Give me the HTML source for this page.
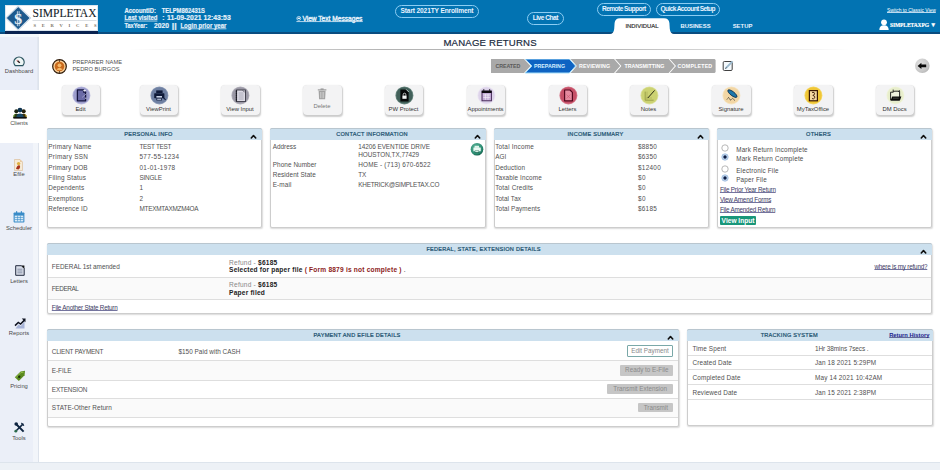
<!DOCTYPE html>
<html><head><meta charset="utf-8">
<style>
*{box-sizing:border-box;margin:0;padding:0}
html,body{width:940px;height:470px;overflow:hidden;background:#fff;font-family:"Liberation Sans",sans-serif;color:#333}
.a{position:absolute}
.t{position:absolute;white-space:nowrap;line-height:10px;height:10px;text-decoration-thickness:0.6px;text-underline-offset:0.7px}
u{text-decoration:underline;text-decoration-skip-ink:none;text-underline-offset:0px;text-decoration-color:rgba(234,244,255,.8)}
.ul{text-decoration:underline;text-decoration-skip-ink:none;text-underline-offset:0px;text-decoration-color:rgba(42,42,106,.65)}
#hdr{left:0;top:0;width:940px;height:34px;background:#0273b2;border-bottom:2px solid #0a4d80}
.hw{color:#fff;font-weight:700}
.pill{position:absolute;border:1.5px solid #8ccdf3;border-radius:8px;color:#eaf4ff;font-weight:700;text-align:center;white-space:nowrap}
#side{left:0;top:36px;width:38.5px;height:426px;background:linear-gradient(to right,#ebeff8 33.5px,#f2f5fa 33.5px);border-right:1px solid #dde3ec}
.si{position:absolute;left:0;width:38px;text-align:center;font-size:5.8px;color:#4a4a4a;line-height:8px}
.btn{position:absolute;top:84.6px;width:38.5px;height:30.4px;background:#f3f3f4;border-radius:4px;box-shadow:0.5px 1.5px 1.5px rgba(0,0,0,.2),0 0 1px rgba(0,0,0,.1)}
.btn .c{position:absolute;left:10px;top:1.5px;width:18px;height:18px;border-radius:50%;box-shadow:0 0 0 0.8px rgba(255,255,255,.6)}
.btn .l{position:absolute;left:-10px;width:58px;top:20.5px;text-align:center;font-size:5.9px;color:#333;line-height:8px;white-space:nowrap}
.pn{position:absolute;background:#fff;border:1px solid #cdcdcd;border-radius:2px;box-shadow:0.5px 1px 1.5px rgba(0,0,0,.15)}
.ph{position:absolute;left:-1px;top:-1px;right:-1px;height:12.1px;border-radius:2px 2px 0 0;background:#cce0ee;color:#184e6c;font-weight:400;font-size:5.6px;letter-spacing:0.25px;-webkit-text-stroke:0.2px #184e6c;line-height:11.8px;border-top:0.6px solid #b9c6cf;text-align:center;padding-right:12px}
.chev{position:absolute;width:4px;height:4px;border-left:1.6px solid #111;border-top:1.6px solid #111;transform:rotate(45deg)}
.b{font-size:6.4px;color:#3a3a3a}
.lk{color:#2a2a6a;text-decoration:underline}
.row{position:absolute;left:0;right:0;border-top:1px solid #e2e2e2}
</style></head><body>

<!-- HEADER -->
<div id="hdr" class="a"></div>
<div class="a" style="left:5px;top:4.5px;width:93px;height:26.8px;background:#fff;border:0.5px solid #dbe6ef"></div>
<svg class="a" style="left:5px;top:4.5px" width="93" height="27" viewBox="0 0 93 27">
  <polygon points="13.2,0.4 26.2,13.1 13.2,25.8 0.2,13.1" fill="#b8cde0"/><polygon points="13.2,1.2 25.4,13.1 13.2,25 1,13.1" fill="#f0f5fa"/>
  <polygon points="13.2,2 24.6,13.1 13.2,24.2 1.8,13.1" fill="#1d5a8e"/>
  <text x="13.2" y="19.4" text-anchor="middle" font-family="Liberation Serif" font-weight="700" font-size="15" fill="#e6eef6">S</text>
  <rect x="11.9" y="6.2" width="0.8" height="15" fill="#e6eef6"/><rect x="13.7" y="6.2" width="0.8" height="15" fill="#e6eef6"/>
  <text x="27.5" y="12.4" font-family="Liberation Serif" font-size="12.2" fill="#141e2a" stroke="#141e2a" stroke-width="0.1" textLength="64" lengthAdjust="spacingAndGlyphs">SIMPLETAX</text>
  <rect x="27.5" y="15.1" width="64" height="0.5" fill="#b7bec6"/>
  <text x="28.5" y="22.4" font-family="Liberation Serif" font-weight="700" font-size="4.6" fill="#7a7264" textLength="63">SERVICES</text>
</svg>

<svg class="a" style="left:0;top:0" width="380" height="34" viewBox="0 0 380 34" font-family="Liberation Sans" font-weight="700" font-size="6.9" fill="#e6f1fa" stroke="#e6f1fa" stroke-width="0.18">
  <text x="124.4" y="12.8" textLength="31.6" lengthAdjust="spacingAndGlyphs">AccountID:</text>
  <text x="161.7" y="12.8" textLength="43.1" lengthAdjust="spacingAndGlyphs">TELPM862431S</text>
  <text x="124.4" y="19.9" textLength="33" lengthAdjust="spacingAndGlyphs">Last visited</text>
  <rect x="124.4" y="20.6" width="33" height="0.85" fill="#e6f1fa" stroke="none" opacity="0.9"/>
  <text x="162.2" y="19.9">:</text>
  <text x="167" y="19.9" textLength="63.7" lengthAdjust="spacingAndGlyphs">11-09-2021 12:43:53</text>
  <text x="124.4" y="27.6" textLength="23" lengthAdjust="spacingAndGlyphs">TaxYear:</text>
  <text x="154" y="27.6" textLength="15" lengthAdjust="spacingAndGlyphs">2020</text>
  <text x="171.8" y="27.6" textLength="4.9" lengthAdjust="spacingAndGlyphs">||</text>
  <text x="180.4" y="27.6" textLength="46" lengthAdjust="spacingAndGlyphs">Login prior year</text>
  <rect x="180.4" y="28.4" width="46" height="0.85" fill="#e6f1fa" stroke="none" opacity="0.9"/>
  <circle cx="298.8" cy="18.4" r="2" fill="none" stroke="#e6f1fa" stroke-width="0.7"/><rect x="297.6" y="17.6" width="2.4" height="1.4" fill="#e6f1fa" stroke="none"/>
  <text x="302.4" y="20.6" font-weight="400" stroke-width="0.35" font-size="6.6" textLength="60" lengthAdjust="spacingAndGlyphs">View Text Messages</text>
  <rect x="296.4" y="21.2" width="66.4" height="0.85" fill="#e6f1fa" stroke="none" opacity="0.9"/>
</svg>

<div class="pill" style="left:395px;top:4.7px;width:84px;height:13.4px;font-size:6.6px;letter-spacing:-0.14px;line-height:10.8px">Start 2021TY Enrollment</div>
<div class="pill" style="left:527px;top:11.5px;width:36.5px;height:13.2px;font-size:6.6px;letter-spacing:-0.5px;line-height:10.6px">Live Chat</div>
<div class="pill" style="left:597px;top:3px;width:53.5px;height:12.8px;font-size:6.6px;letter-spacing:-0.55px;line-height:10.2px">Remote Support</div>
<div class="pill" style="left:655.5px;top:3px;width:64.5px;height:12.8px;font-size:6.6px;letter-spacing:-0.64px;line-height:10.2px">Quick Account Setup</div>

<!-- tabs -->
<svg class="a" style="left:610px;top:18.3px" width="64" height="16" viewBox="0 0 64 16">
  <path d="M0,16 Q3.6,16 4.2,11 L4.6,5 Q5,0.2 10,0.2 L54,0.2 Q59,0.2 59.4,5 L59.8,11 Q60.4,16 64,16 Z" fill="#fff"/>
</svg>
<div class="t" style="left:614px;top:21.2px;width:56px;text-align:center;font-size:5.9px;color:#3a3a3a;-webkit-text-stroke:0.22px #3a3a3a">INDIVIDUAL</div>
<div class="t hw" style="left:680.5px;top:21.3px;font-size:5.9px;color:#eaf4ff">BUSINESS</div>
<div class="t hw" style="left:732.7px;top:21px;font-size:5.9px;color:#eaf4ff">SETUP</div>

<div class="t" style="left:887px;top:6.2px;font-size:4.9px;color:#fff"><u>Switch to Classic View</u></div>
<svg class="a" style="left:878.5px;top:19px" width="10" height="11" viewBox="0 0 10 11">
  <circle cx="5" cy="3.3" r="2.9" fill="#fff"/>
  <path d="M0.3,11 Q0.3,6.3 5,6.3 Q9.7,6.3 9.7,11 Z" fill="#fff"/>
</svg>
<div class="t hw" style="left:890px;top:19.7px;font-size:5.5px;font-family:'Liberation Serif';letter-spacing:-0.1px;-webkit-text-stroke:0.15px #fff">SIMPLETAXPG <span style="font-family:'Liberation Sans';font-size:6.5px">&#9660;</span></div>

<!-- SIDEBAR -->
<div id="side" class="a"></div>
<div class="a" style="left:0;top:34px;width:38.5px;height:3px;background:#f3f8fb"></div>
<div class="a" style="left:5px;top:31px;width:93px;height:2.5px;background:#0a2350"></div>
<div class="a" style="left:0;top:37px;width:38px;height:52.5px;background:#eaeef8;border-right:1px solid #e2e7f0"></div>
<div class="a" style="left:0;top:89.5px;width:39.5px;height:53px;background:#fff"></div>


<!-- sidebar icons -->
<svg class="a" style="left:13px;top:55.5px" width="12" height="11" viewBox="0 0 12 11">
  <path d="M2.2,9.6 A5.1,5.1 0 1 1 9.8,9.6 Z" fill="#eef6f6" stroke="#2d5560" stroke-width="1.3"/>
  <path d="M3.6,4 L6.4,6.6" stroke="#f0a8a8" stroke-width="1.6"/>
  <path d="M4.6,4.8 L6.8,6.9" stroke="#1c1c1c" stroke-width="1.3"/>
</svg>
<div class="si" style="top:66.7px">Dashboard</div>

<svg class="a" style="left:12.6px;top:106.6px" width="14" height="12" viewBox="0 0 14 12">
  <circle cx="3.3" cy="4.2" r="2" fill="#1a2414"/>
  <circle cx="10.7" cy="4.2" r="2" fill="#24200c"/>
  <path d="M0.2,11 Q0.2,6.8 3.3,6.8 Q5,6.8 5.6,7.6 L5.6,11 Z" fill="#2a3a1a"/>
  <path d="M13.8,11 Q13.8,6.8 10.7,6.8 Q9,6.8 8.4,7.6 L8.4,11 Z" fill="#3a3210"/>
  <path d="M0.7,10 Q0.8,7.6 2.2,7.1" fill="none" stroke="#8cc040" stroke-width="0.8"/>
  <path d="M13.3,10 Q13.2,7.6 11.8,7.1" fill="none" stroke="#f2d040" stroke-width="0.8"/>
  <circle cx="7" cy="3.1" r="2.4" fill="#0e3450"/>
  <path d="M3.4,11 Q3.4,6.4 7,6.4 Q10.6,6.4 10.6,11 Z" fill="#184868"/>
  <rect x="0.4" y="10.2" width="13.2" height="1.4" fill="#050505"/>
</svg>
<div class="si" style="top:119px">Clients</div>

<svg class="a" style="left:14.3px;top:159px" width="9" height="12" viewBox="0 0 9 12">
  <path d="M0.5,0.5 L6,0.5 L8.5,3 L8.5,11.5 L0.5,11.5 Z" fill="#f6ead6" stroke="#d8b890" stroke-width="0.6"/>
  <path d="M6,0.5 L6,3 L8.5,3" fill="#e9c9a0"/>
  <circle cx="4.6" cy="4.6" r="1.7" fill="#e0b040"/>
  <path d="M2,10 Q3,5.6 5.6,6.2 Q7,8 4.6,10.6 Z" fill="#a8321a"/>
</svg>
<div class="si" style="top:170.4px">Efile</div>

<svg class="a" style="left:13px;top:211px" width="12" height="12" viewBox="0 0 12 12">
  <rect x="0.6" y="1.5" width="10.8" height="10" rx="0.8" fill="#3a8cc8"/>
  <rect x="1.7" y="4.6" width="8.6" height="5.9" fill="#d8eaf7"/>
  <path d="M1.7,6.5 H10.3 M1.7,8.5 H10.3 M4.6,4.6 V10.5 M7.4,4.6 V10.5" stroke="#3a8cc8" stroke-width="0.6"/>
  <rect x="3" y="0.2" width="1.2" height="2.6" fill="#3a8cc8"/>
  <rect x="7.8" y="0.2" width="1.2" height="2.6" fill="#3a8cc8"/>
</svg>
<div class="si" style="top:223.8px">Scheduler</div>

<svg class="a" style="left:14.8px;top:264.8px" width="10" height="11" viewBox="0 0 10 11">
  <path d="M0.7,0.7 L6.4,0.7 L9.2,3.5 L9.2,10.3 L0.7,10.3 Z" fill="#d8dde8" stroke="#242c40" stroke-width="1"/>
  <path d="M6.2,0.5 L9.4,3.7 L9.4,0.5 Z" fill="#111"/>
  <path d="M2.4,4.2 H7.4 M2.4,6 H7.4 M2.4,7.8 H7.4" stroke="#6a7690" stroke-width="0.7"/>
</svg>
<div class="si" style="top:276.7px">Letters</div>

<svg class="a" style="left:13.5px;top:317.5px" width="12" height="11" viewBox="0 0 12 11">
  <path d="M1.5,10.5 L4.5,6.5 L6.8,8 L10.5,3.5 L10.5,10.5 Z" fill="#a8b4d8"/>
  <path d="M1,7.6 L4.3,4.4 L6.6,6 L10.2,2.4" fill="none" stroke="#0e1220" stroke-width="1.5"/>
  <path d="M7.8,0.6 L11.6,0.4 L11.4,4.2 Z" fill="#0e1220"/>
</svg>
<div class="si" style="top:329.1px">Reports</div>

<svg class="a" style="left:13.5px;top:369.5px" width="12" height="12" viewBox="0 0 12 12">
  <path d="M0.8,7.2 L6.6,1.4 L11,0.8 L10.6,5.2 L4.8,11 Z" fill="#5a8a20"/>
  <path d="M2,7.6 L7,2.4 L9.6,2.2" fill="none" stroke="#9cc850" stroke-width="0.9"/>
  <circle cx="5.2" cy="6.8" r="1.2" fill="#1c3008"/>
</svg>
<div class="si" style="top:381.5px">Pricing</div>

<svg class="a" style="left:14px;top:422px" width="11" height="11" viewBox="0 0 11 11">
  <path d="M1.8,1.8 L9.6,9.6" stroke="#0e2440" stroke-width="2"/>
  <path d="M9.4,1.6 L2.2,8.8" stroke="#0e2440" stroke-width="1.5"/>
  <circle cx="1.8" cy="9.2" r="1.4" fill="#2a6a4a"/>
  <path d="M7.6,0.6 L10.4,3.4 L9.4,4 L7,1.6 Z" fill="#0e2440"/>
  <circle cx="2.2" cy="2" r="1.8" fill="#0e2440"/>
</svg>
<div class="si" style="top:433.7px">Tools</div>

<!-- footer band -->
<div class="a" style="left:0;top:462px;width:940px;height:8px;background:#edf1f6;border-top:1px solid #dde4ec"></div>

<!-- TITLE -->
<div class="t" style="left:443.4px;top:37.9px;font-size:9.6px;letter-spacing:0.2px;color:#1a2b40;-webkit-text-stroke:0.2px #1a2b40">MANAGE RETURNS</div>
<div class="a" style="left:130px;top:48.6px;width:720px;height:1px;background:linear-gradient(to right,rgba(180,180,180,0),#b4b4b4 35%,#b4b4b4 65%,rgba(180,180,180,0))"></div>

<!-- preparer -->
<svg class="a" style="left:51.8px;top:58.6px" width="15" height="15" viewBox="0 0 15 15">
  <circle cx="7.5" cy="7.5" r="6.8" fill="#f9cf98" stroke="#2e1a08" stroke-width="1.2"/>
  <circle cx="7.5" cy="7.5" r="4.8" fill="#c96a1c"/>
  <circle cx="7.5" cy="6.3" r="1.9" fill="#f6b868"/>
  <path d="M4.4,10.6 Q7.5,6.8 10.6,10.6 Q7.5,12 4.4,10.6 Z" fill="#f6b868"/>
  <rect x="7.1" y="1.2" width="0.8" height="1.6" fill="#2e1a08"/>
  <rect x="7.1" y="12.2" width="0.8" height="1.6" fill="#2e1a08"/>
</svg>
<div class="t" style="left:72.5px;top:57px;font-size:5.7px;color:#505050;letter-spacing:0.05px">PREPARER NAME</div>
<div class="t" style="left:72.5px;top:64px;font-size:5.7px;color:#505050;letter-spacing:0.05px">PEDRO BURGOS</div>


<!-- PROGRESS -->
<svg class="a" style="left:490px;top:59.2px" width="230" height="15" viewBox="0 0 230 15">
  <polygon points="1,0 34,0 40.6,7 34,14 1,14" fill="#a9a9a9"/>
  <polygon points="35.2,0 79.4,0 85.6,7 79.4,14 35.2,14 41.8,7" fill="#0e63c2" stroke="#a6e0fa" stroke-width="1"/>
  <polygon points="80.6,0 124,0 130.2,7 124,14 80.6,14 86.8,7" fill="#a9a9a9"/>
  <polygon points="125.2,0 178.6,0 184.8,7 178.6,14 125.2,14 131.4,7" fill="#a9a9a9"/>
  <polygon points="179.8,0 224.6,0 225.6,1 225.6,13 224.6,14 179.8,14 186,7" fill="#a9a9a9"/>
  <text x="5.4" y="9.3" font-family="Liberation Sans" font-weight="700" font-size="5.3" fill="#5a5a5a" textLength="25">CREATED</text>
  <text x="44" y="9.3" font-family="Liberation Sans" font-weight="700" font-size="5.3" fill="#d6f0ff" textLength="31">PREPARING</text>
  <text x="89" y="9.3" font-family="Liberation Sans" font-weight="700" font-size="5.3" fill="#fff" textLength="31">REVIEWING</text>
  <text x="134.4" y="9.3" font-family="Liberation Sans" font-weight="700" font-size="5.3" fill="#fff" textLength="40">TRANSMITTING</text>
  <text x="187.6" y="9.3" font-family="Liberation Sans" font-weight="700" font-size="5.3" fill="#fff" textLength="34.6">COMPLETED</text>
</svg>
<svg class="a" style="left:721.5px;top:59.5px" width="12" height="12" viewBox="0 0 12 12">
  <rect x="1.2" y="1.5" width="9" height="9" rx="1.2" fill="#f4f9fc" stroke="#2a2a2a" stroke-width="0.9"/>
  <path d="M3.6,8.4 L10.6,1.4" stroke="#9ab8cc" stroke-width="1.8"/>
  <path d="M3.4,8.6 L4.4,7.6" stroke="#444" stroke-width="1"/>
</svg>
<svg class="a" style="left:914px;top:57.5px" width="16" height="16" viewBox="0 0 16 16">
  <defs><radialGradient id="bg1" cx="0.35" cy="0.35" r="0.75"><stop offset="0" stop-color="#e2e2e2"/><stop offset="0.7" stop-color="#c8c8c8"/><stop offset="1" stop-color="#b4b4b4"/></radialGradient></defs>
  <circle cx="8.3" cy="7.8" r="7.3" fill="url(#bg1)"/>
  <path d="M3.6,7.9 L7.4,4.8 L7.4,6.5 L12.2,6.5 L12.2,9.3 L7.4,9.3 L7.4,11 Z" fill="#0a0a0a"/>
</svg>

<!-- ACTION BUTTONS -->
<div class="btn" style="left:61.5px"><svg class="a" style="left:0;top:0" width="38.5" height="22" viewBox="0 0 38.5 22"><circle cx="19.4" cy="10.4" r="9" fill="#bdbde0"/><circle cx="19.4" cy="10.4" r="8.2" fill="#9c9dcc"/><path d="M15.4,4.9 L21.6,4.9 L21.6,7 L23.6,7 L23.6,15.8 L15.4,15.8 Z" fill="#6a6aa6" stroke="#15153f" stroke-width="1.3" stroke-linejoin="round"/><ellipse cx="22.6" cy="5.6" rx="1.4" ry="0.9" fill="#eeeefa"/><path d="M20.6,12 L24.6,8.6" stroke="#eeeefa" stroke-width="0.8" stroke-dasharray="0.9 0.7"/><circle cx="23.8" cy="13.2" r="0.6" fill="#eeeefa"/></svg><div class="l">Edit</div></div>
<div class="btn" style="left:139.5px"><svg class="a" style="left:0;top:0" width="38.5" height="22" viewBox="0 0 38.5 22"><circle cx="19.4" cy="10.4" r="9" fill="#8c9ab6"/><circle cx="19.4" cy="10.4" r="8.2" fill="#6f80a2"/><rect x="16.2" y="5.4" width="6.4" height="2.6" fill="#0f1a38"/><rect x="14.2" y="8.2" width="10.2" height="5" rx="0.6" fill="#0f1a38"/><rect x="16.4" y="11" width="5.6" height="1.6" fill="#c8d2e6"/><rect x="16.4" y="13.2" width="5.6" height="2.2" fill="#0f1a38"/><rect x="17.2" y="13.7" width="4" height="1.1" fill="#c8d2e6"/><path d="M23.4,12.6 L25.6,14.8" stroke="#0f1a38" stroke-width="1.1"/></svg><div class="l">ViewPrint</div></div>
<div class="btn" style="left:221px"><svg class="a" style="left:0;top:0" width="38.5" height="22" viewBox="0 0 38.5 22"><circle cx="19.4" cy="10.4" r="9" fill="#b4b2bc"/><circle cx="19.4" cy="10.4" r="8.2" fill="#9a98a5"/><rect x="15.6" y="5" width="8.8" height="11.6" fill="#dcdae4" stroke="#2a2a36" stroke-width="0.8"/><path d="M15.4,5.6 V16.2" stroke="#0a0a10" stroke-width="1.4" stroke-dasharray="1.1 0.9"/><path d="M17.6,8 H22.6 M17.6,10 H22.6 M17.6,12 H22.6 M17.6,14 H22.6" stroke="#8a889a" stroke-width="0.55"/><path d="M21.8,5.4 L23.8,7.4" stroke="#2a2a36" stroke-width="0.7"/></svg><div class="l">View Input</div></div>
<div class="btn" style="left:303px"><svg class="a" style="left:0;top:0" width="38.5" height="22" viewBox="0 0 38.5 22"><rect x="14.8" y="4.4" width="8.6" height="1" fill="#8e8e8e"/><rect x="17.6" y="3.5" width="3" height="1.1" fill="#8e8e8e"/><path d="M15.6,5.8 L22.6,5.8 L22.1,14.2 L16.1,14.2 Z" fill="#a2a2a2"/><path d="M17.6,7 V13.2 M19.1,7 V13.2 M20.6,7 V13.2" stroke="#e6e6e6" stroke-width="0.55"/></svg><div class="l" style="top:17.7px;color:#777">Delete</div></div>
<div class="btn" style="left:384.5px"><svg class="a" style="left:0;top:0" width="38.5" height="22" viewBox="0 0 38.5 22"><circle cx="19.4" cy="10.4" r="9" fill="#6a8880"/><circle cx="19.4" cy="10.4" r="8.2" fill="#42605a"/><path d="M15.4,4.6 L21,4.6 L23.6,7.2 L23.6,16.4 L15.4,16.4 Z" fill="#070a09"/><path d="M21.2,4.4 L23.9,7.1" stroke="#d6e4de" stroke-width="0.8"/><rect x="17.4" y="10.6" width="4.2" height="3.2" fill="#f2f6f4"/><path d="M18.2,10.7 V9.5 A1.3,1.3 0 0 1 20.8,9.5 V10.7" fill="none" stroke="#f2f6f4" stroke-width="0.75"/></svg><div class="l">PW Protect</div></div>
<div class="btn" style="left:466.5px"><svg class="a" style="left:0;top:0" width="38.5" height="22" viewBox="0 0 38.5 22"><circle cx="19.4" cy="10.4" r="9" fill="#ebe5f3"/><circle cx="19.4" cy="10.4" r="8.2" fill="#ddd3ea"/><rect x="15" y="6.2" width="9.4" height="9.6" fill="#c4acd8" stroke="#3e2050" stroke-width="0.9"/><rect x="14.8" y="5.6" width="9.8" height="2.4" fill="#0c0810"/><circle cx="16.8" cy="5" r="0.7" fill="#0c0810"/><circle cx="22.6" cy="5" r="0.7" fill="#0c0810"/><path d="M16.2,10 H23.2 M16.2,12.4 H23.2 M18.4,9 V14.8 M21,9 V14.8" stroke="#f4eefa" stroke-width="0.7"/></svg><div class="l">Appointments</div></div>
<div class="btn" style="left:548.5px"><svg class="a" style="left:0;top:0" width="38.5" height="22" viewBox="0 0 38.5 22"><circle cx="19.4" cy="10.4" r="9" fill="#d67a8c"/><circle cx="19.4" cy="10.4" r="8.2" fill="#c65068"/><path d="M15.6,5 L21,5 L23.4,7.4 L23.4,15.8 L15.6,15.8 Z" fill="#e58ba0" stroke="#55081e" stroke-width="1.2" stroke-linejoin="round"/><path d="M17.4,9.5 L21.4,13.5 M21.4,9.5 L17.4,13.5" stroke="#c65068" stroke-width="0.5"/></svg><div class="l">Letters</div></div>
<div class="btn" style="left:629.5px"><svg class="a" style="left:0;top:0" width="38.5" height="22" viewBox="0 0 38.5 22"><circle cx="19.4" cy="10.4" r="9" fill="#dde3a0"/><circle cx="19.4" cy="10.4" r="8.2" fill="#ccd272"/><path d="M15.2,6.6 L15.2,15.2 L23.6,15.2" fill="none" stroke="#8e9440" stroke-width="0.8"/><path d="M17,6.6 V15 M15.2,13 H22" stroke="#a4aa50" stroke-width="0.6"/><path d="M17.8,13 L24.6,5.4" stroke="#2c2e14" stroke-width="1"/></svg><div class="l">Notes</div></div>
<div class="btn" style="left:712px"><svg class="a" style="left:0;top:0" width="38.5" height="22" viewBox="0 0 38.5 22"><circle cx="19.4" cy="10.4" r="9" fill="#f6e4c2"/><circle cx="19.4" cy="10.4" r="8.2" fill="#f2d6a4"/><ellipse cx="20.4" cy="8.6" rx="5.6" ry="2" transform="rotate(38 20.4 8.6)" fill="#1e78aa" stroke="#0a2c4a" stroke-width="0.8"/><path d="M15,14.4 L16.6,12.4 L18.6,15.2 L20.6,13.4 L22.8,15.4" fill="none" stroke="#141414" stroke-width="0.9" stroke-dasharray="0.9 0.6"/></svg><div class="l">Signature</div></div>
<div class="btn" style="left:794px"><svg class="a" style="left:0;top:0" width="38.5" height="22" viewBox="0 0 38.5 22"><circle cx="19.4" cy="10.4" r="9" fill="#f4d868"/><circle cx="19.4" cy="10.4" r="8.2" fill="#f0c636"/><rect x="15.4" y="5.6" width="8" height="10.2" fill="#f4d8a2" stroke="#3a1804" stroke-width="1.2"/><path d="M18,7.4 Q20.8,6.8 20.6,8.8 Q20.4,10.2 18.8,10.4 Q21.2,10.8 20.8,12.8 Q20,14.4 18,13.6" fill="none" stroke="#3a1804" stroke-width="0.9"/></svg><div class="l">MyTaxOffice</div></div>
<div class="btn" style="left:875.5px"><svg class="a" style="left:0;top:0" width="38.5" height="22" viewBox="0 0 38.5 22"><circle cx="19.4" cy="10.4" r="9" fill="#f0f4dc"/><circle cx="19.4" cy="10.4" r="8.2" fill="#e8eecc"/><path d="M14.6,7.2 L17.4,7.2 L18.2,6.2 L23.6,6.2 L23.6,15 L14.6,15 Z" fill="#eef2de" stroke="#111" stroke-width="0.9"/><path d="M16.2,11.6 L25.4,11.6 L23.8,15.6 L14.6,15.6 Z" fill="#0a0a0a"/><path d="M17.2,13.2 H22.6" stroke="#eef2de" stroke-width="0.4" stroke-dasharray="0.6 0.4"/><path d="M17.2,7 L17.2,4.6 M22.4,6.8 L23.6,5.4" stroke="#111" stroke-width="0.9"/></svg><div class="l">DM Docs</div></div>
<div class="pn" style="left:47px;top:128px;width:215px;height:100px"><div class="ph" style="padding-right:12px">PERSONAL INFO</div></div>
<svg class="a" style="left:249.6px;top:133.8px" width="7" height="5" viewBox="0 0 7 5"><path d="M1.3,4 L3.5,1.5 L5.7,4" fill="none" stroke="#0e0e0e" stroke-width="1.6" stroke-linecap="round" stroke-linejoin="round"/></svg>
<div class="pn" style="left:270px;top:128px;width:216px;height:100px"><div class="ph" style="padding-right:12px">CONTACT INFORMATION</div></div>
<svg class="a" style="left:473.6px;top:133.8px" width="7" height="5" viewBox="0 0 7 5"><path d="M1.3,4 L3.5,1.5 L5.7,4" fill="none" stroke="#0e0e0e" stroke-width="1.6" stroke-linecap="round" stroke-linejoin="round"/></svg>
<div class="pn" style="left:494px;top:128px;width:215px;height:100px"><div class="ph" style="padding-right:12px">INCOME SUMMARY</div></div>
<svg class="a" style="left:696.6px;top:133.8px" width="7" height="5" viewBox="0 0 7 5"><path d="M1.3,4 L3.5,1.5 L5.7,4" fill="none" stroke="#0e0e0e" stroke-width="1.6" stroke-linecap="round" stroke-linejoin="round"/></svg>
<div class="pn" style="left:717px;top:128px;width:215px;height:100px"><div class="ph" style="padding-right:12px">OTHERS</div></div>
<svg class="a" style="left:919.6px;top:133.8px" width="7" height="5" viewBox="0 0 7 5"><path d="M1.3,4 L3.5,1.5 L5.7,4" fill="none" stroke="#0e0e0e" stroke-width="1.6" stroke-linecap="round" stroke-linejoin="round"/></svg>
<div class="t" style="left:48.3px;top:142.40px;font-size:6.4px;color:#505050;font-weight:400;letter-spacing:0.205px;">Primary Name</div>
<div class="t" style="left:139.4px;top:142.40px;font-size:6.4px;color:#505050;font-weight:400;letter-spacing:-0.277px;">TEST TEST</div>
<div class="t" style="left:48.3px;top:152.40px;font-size:6.4px;color:#505050;font-weight:400;letter-spacing:0.266px;">Primary SSN</div>
<div class="t" style="left:139.4px;top:152.40px;font-size:6.4px;color:#505050;font-weight:400;letter-spacing:0.335px;">577-55-1234</div>
<div class="t" style="left:48.3px;top:162.70px;font-size:6.4px;color:#505050;font-weight:400;letter-spacing:0.166px;">Primary DOB</div>
<div class="t" style="left:139.4px;top:162.70px;font-size:6.4px;color:#505050;font-weight:400;letter-spacing:0.333px;">01-01-1978</div>
<div class="t" style="left:48.3px;top:173.00px;font-size:6.4px;color:#505050;font-weight:400;letter-spacing:0.202px;">Filing Status</div>
<div class="t" style="left:139.4px;top:173.00px;font-size:6.4px;color:#505050;font-weight:400;letter-spacing:-0.171px;">SINGLE</div>
<div class="t" style="left:48.3px;top:183.20px;font-size:6.4px;color:#505050;font-weight:400;letter-spacing:0.159px;">Dependents</div>
<div class="t" style="left:139.4px;top:183.20px;font-size:6.4px;color:#505050;font-weight:400;">1</div>
<div class="t" style="left:48.3px;top:193.50px;font-size:6.4px;color:#505050;font-weight:400;letter-spacing:0.201px;">Exemptions</div>
<div class="t" style="left:139.4px;top:193.50px;font-size:6.4px;color:#505050;font-weight:400;">2</div>
<div class="t" style="left:48.3px;top:203.80px;font-size:6.4px;color:#505050;font-weight:400;letter-spacing:0.149px;">Reference ID</div>
<div class="t" style="left:139.4px;top:203.80px;font-size:6.4px;color:#505050;font-weight:400;letter-spacing:-0.244px;">MTEXMTAXMZM4OA</div>
<div class="t" style="left:272.7px;top:142.30px;font-size:6.4px;color:#505050;font-weight:400;letter-spacing:-0.009px;">Address</div>
<div class="t" style="left:358.2px;top:142.30px;font-size:6.4px;color:#505050;font-weight:400;letter-spacing:-0.048px;">14206 EVENTIDE DRIVE</div>
<div class="t" style="left:358.2px;top:150.30px;font-size:6.4px;color:#505050;font-weight:400;letter-spacing:-0.029px;">HOUSTON,TX,77429</div>
<div class="t" style="left:272.7px;top:159.90px;font-size:6.4px;color:#505050;font-weight:400;letter-spacing:0.074px;">Phone Number</div>
<div class="t" style="left:358.2px;top:159.90px;font-size:6.4px;color:#505050;font-weight:400;letter-spacing:0.187px;">HOME - (713) 670-6522</div>
<div class="t" style="left:272.7px;top:170.00px;font-size:6.4px;color:#505050;font-weight:400;letter-spacing:0.091px;">Resident State</div>
<div class="t" style="left:358.2px;top:170.00px;font-size:6.4px;color:#505050;font-weight:400;letter-spacing:0.028px;">TX</div>
<div class="t" style="left:272.7px;top:180.30px;font-size:6.4px;color:#505050;font-weight:400;letter-spacing:0.138px;">E-mail</div>
<div class="t" style="left:358.2px;top:180.30px;font-size:6.4px;color:#505050;font-weight:400;letter-spacing:-0.218px;">KHETRICK@SIMPLETAX.CO</div>
<svg class="a" style="left:469.5px;top:142.2px" width="14" height="14" viewBox="0 0 14 14">
<defs><radialGradient id="gg" cx="0.4" cy="0.35" r="0.7"><stop offset="0" stop-color="#5cb49a"/><stop offset="0.75" stop-color="#2a8a70"/><stop offset="1" stop-color="#0c5542"/></radialGradient></defs>
<circle cx="7" cy="7.2" r="6.3" fill="url(#gg)"/>
<rect x="4.6" y="3.8" width="4.4" height="2" fill="#dff5ec"/>
<rect x="3.4" y="5.6" width="7.4" height="3.6" rx="0.5" fill="#e8f8f2"/>
<rect x="4.8" y="8.6" width="4.2" height="2.2" fill="#0d5a46"/>
<rect x="5.2" y="8.9" width="3.4" height="1.3" fill="#cfeee2"/>
</svg>
<div class="t" style="left:495.2px;top:142.40px;font-size:6.4px;color:#505050;font-weight:400;letter-spacing:0.215px;">Total Income</div>
<div class="t" style="left:638px;top:142.40px;font-size:6.4px;color:#505050;font-weight:400;letter-spacing:0.255px;">$8850</div>
<div class="t" style="left:495.2px;top:152.40px;font-size:6.4px;color:#505050;font-weight:400;letter-spacing:-0.008px;">AGI</div>
<div class="t" style="left:638px;top:152.40px;font-size:6.4px;color:#505050;font-weight:400;letter-spacing:0.255px;">$6350</div>
<div class="t" style="left:495.2px;top:162.70px;font-size:6.4px;color:#505050;font-weight:400;letter-spacing:0.127px;">Deduction</div>
<div class="t" style="left:638px;top:162.70px;font-size:6.4px;color:#505050;font-weight:400;letter-spacing:0.274px;">$12400</div>
<div class="t" style="left:495.2px;top:173.00px;font-size:6.4px;color:#505050;font-weight:400;letter-spacing:0.141px;">Taxable Income</div>
<div class="t" style="left:638px;top:173.00px;font-size:6.4px;color:#505050;font-weight:400;letter-spacing:0.391px;">$0</div>
<div class="t" style="left:495.2px;top:183.20px;font-size:6.4px;color:#505050;font-weight:400;letter-spacing:0.197px;">Total Credits</div>
<div class="t" style="left:638px;top:183.20px;font-size:6.4px;color:#505050;font-weight:400;letter-spacing:0.391px;">$0</div>
<div class="t" style="left:495.2px;top:193.50px;font-size:6.4px;color:#505050;font-weight:400;letter-spacing:0.086px;">Total Tax</div>
<div class="t" style="left:638px;top:193.50px;font-size:6.4px;color:#505050;font-weight:400;letter-spacing:0.391px;">$0</div>
<div class="t" style="left:495.2px;top:203.80px;font-size:6.4px;color:#505050;font-weight:400;letter-spacing:0.100px;">Total Payments</div>
<div class="t" style="left:638px;top:203.80px;font-size:6.4px;color:#505050;font-weight:400;letter-spacing:0.255px;">$6185</div>
<svg class="a" style="left:721.2px;top:144px" width="8" height="8" viewBox="0 0 8 8"><circle cx="4" cy="4" r="3.2" fill="#fff" stroke="#9a9a9a" stroke-width="0.7"/></svg>
<div class="t" style="left:736.2px;top:144.70px;font-size:6.3px;color:#4a4a4a;font-weight:400;letter-spacing:0.2px">Mark Return Incomplete</div>
<svg class="a" style="left:721.2px;top:153.3px" width="8" height="8" viewBox="0 0 8 8"><circle cx="4" cy="4" r="3.2" fill="#c6daf0" stroke="#8fb2d8" stroke-width="0.7"/><circle cx="4" cy="4" r="1.7" fill="#0a1c44"/></svg>
<div class="t" style="left:736.2px;top:154.10px;font-size:6.3px;color:#4a4a4a;font-weight:400;letter-spacing:0.2px">Mark Return Complete</div>
<svg class="a" style="left:721.2px;top:165px" width="8" height="8" viewBox="0 0 8 8"><circle cx="4" cy="4" r="3.2" fill="#fff" stroke="#9a9a9a" stroke-width="0.7"/></svg>
<div class="t" style="left:736.2px;top:165.80px;font-size:6.3px;color:#4a4a4a;font-weight:400;letter-spacing:0.2px">Electronic File</div>
<svg class="a" style="left:721.2px;top:174.4px" width="8" height="8" viewBox="0 0 8 8"><circle cx="4" cy="4" r="3.2" fill="#c6daf0" stroke="#8fb2d8" stroke-width="0.7"/><circle cx="4" cy="4" r="1.7" fill="#0a1c44"/></svg>
<div class="t" style="left:736.2px;top:175.10px;font-size:6.3px;color:#4a4a4a;font-weight:400;letter-spacing:0.2px">Paper File</div>
<div class="t" style="left:719.9px;top:185.20px;font-size:6.3px;color:#3a3a64;font-weight:400;letter-spacing:-0.2px"><span class="ul">File Prior Year Return</span></div>
<div class="t" style="left:719.9px;top:195.30px;font-size:6.3px;color:#3a3a64;font-weight:400;letter-spacing:-0.2px"><span class="ul">View Amend Forms</span></div>
<div class="t" style="left:719.9px;top:204.60px;font-size:6.3px;color:#3a3a64;font-weight:400;letter-spacing:-0.2px"><span class="ul">File Amended Return</span></div>
<div class="a" style="left:719.9px;top:215.9px;width:36.3px;height:8.8px;background:#19977a;border-radius:1px"></div>
<div class="t" style="left:719.9px;top:216.10px;font-size:6.6px;color:#fff;font-weight:700;width:36.3px;text-align:center">View Input</div>
<div class="pn" style="left:47px;top:243px;width:885px;height:70.5px"><div class="ph" style="padding-right:12px">FEDERAL, STATE, EXTENSION DETAILS</div></div>
<svg class="a" style="left:919.6px;top:248.8px" width="7" height="5" viewBox="0 0 7 5"><path d="M1.3,4 L3.5,1.5 L5.7,4" fill="none" stroke="#0e0e0e" stroke-width="1.6" stroke-linecap="round" stroke-linejoin="round"/></svg>
<div class="a" style="left:48px;top:277px;width:883px;height:23px;background:#fafafa;border-top:1px solid #dedede;border-bottom:1px solid #dedede"></div>
<div class="t" style="left:51.8px;top:262.40px;font-size:6.4px;color:#505050;font-weight:400;letter-spacing:-0.004px;">FEDERAL 1st amended</div>
<div class="t" style="left:229.1px;top:257.80px;font-size:6.6px;color:#888;font-weight:400;letter-spacing:0.2px">Refund - <b style="color:#222">$6185</b></div>
<div class="t" style="left:229.1px;top:265.10px;font-size:6.6px;color:#222;font-weight:400;letter-spacing:0.2px"><b style="color:#222">Selected for paper file</b> <b style="color:#8c1a1a">( Form 8879 is not complete )</b> .</div>
<div class="t" style="left:51.8px;top:284.10px;font-size:6.4px;color:#505050;font-weight:400;letter-spacing:-0.397px;">FEDERAL</div>
<div class="t" style="left:229.1px;top:279.70px;font-size:6.6px;color:#888;font-weight:400;letter-spacing:0.2px">Refund - <b style="color:#222">$6185</b></div>
<div class="t" style="left:229.1px;top:287.60px;font-size:6.6px;color:#222;font-weight:400;letter-spacing:0.2px"><b style="color:#222">Paper filed</b></div>
<div class="t" style="left:51.8px;top:302.60px;font-size:6.3px;color:#3a3a64;font-weight:400;letter-spacing:-0.2px"><span class="ul">File Another State Return</span></div>
<div class="t" style="left:874.4px;top:262.40px;font-size:6.3px;color:#3a3a64;font-weight:400;letter-spacing:-0.2px"><span class="ul">where is my refund?</span></div>
<div class="pn" style="left:47px;top:329px;width:632px;height:97.5px"><div class="ph" style="padding-right:12px">PAYMENT AND EFILE DETAILS</div></div>
<svg class="a" style="left:666.6px;top:334.8px" width="7" height="5" viewBox="0 0 7 5"><path d="M1.3,4 L3.5,1.5 L5.7,4" fill="none" stroke="#0e0e0e" stroke-width="1.6" stroke-linecap="round" stroke-linejoin="round"/></svg>
<div class="a" style="left:48px;top:360.4px;width:630px;height:1px;background:#dedede"></div>
<div class="a" style="left:48px;top:379.6px;width:630px;height:1px;background:#dedede"></div>
<div class="a" style="left:48px;top:398.3px;width:630px;height:1px;background:#dedede"></div>
<div class="a" style="left:48px;top:416.6px;width:630px;height:1px;background:#dedede"></div>
<div class="a" style="left:48px;top:361.4px;width:630px;height:18.2px;background:#fafafa"></div>
<div class="a" style="left:48px;top:399.3px;width:630px;height:17.3px;background:#fafafa"></div>
<div class="t" style="left:51.8px;top:347.30px;font-size:6.4px;color:#505050;font-weight:400;letter-spacing:-0.211px;">CLIENT PAYMENT</div>
<div class="t" style="left:178.4px;top:347.00px;font-size:6.4px;color:#505050;font-weight:400;letter-spacing:0.035px;">$150 Paid with CASH</div>
<div class="t" style="left:51.8px;top:366.20px;font-size:6.4px;color:#505050;font-weight:400;letter-spacing:-0.058px;">E-FILE</div>
<div class="t" style="left:51.8px;top:384.90px;font-size:6.4px;color:#505050;font-weight:400;letter-spacing:-0.167px;">EXTENSION</div>
<div class="t" style="left:51.8px;top:403.00px;font-size:6.4px;color:#505050;font-weight:400;letter-spacing:0.081px;">STATE-Other Return</div>
<div class="a" style="left:626.6px;top:345px;width:46.799999999999955px;height:12.199999999999989px;background:#fff;border:0.8px solid #7aa8a8;color:#888;font-size:6.3px;line-height:10.599999999999989px;text-align:center;white-space:nowrap;border-radius:1px">Edit Payment</div>
<div class="a" style="left:620.2px;top:365px;width:53.19999999999993px;height:10.699999999999989px;background:#c6c6c6;color:#8a8a8a;font-size:6.3px;line-height:10.699999999999989px;text-align:center;white-space:nowrap;border-radius:1px">Ready to E-File</div>
<div class="a" style="left:607px;top:383.8px;width:66.39999999999998px;height:10.199999999999989px;background:#c6c6c6;color:#8a8a8a;font-size:6.3px;line-height:10.199999999999989px;text-align:center;white-space:nowrap;border-radius:1px">Transmit Extension</div>
<div class="a" style="left:638.3px;top:402.6px;width:35.10000000000002px;height:9.899999999999977px;background:#c6c6c6;color:#8a8a8a;font-size:6.3px;line-height:9.899999999999977px;text-align:center;white-space:nowrap;border-radius:1px">Transmit</div>
<div class="pn" style="left:687px;top:329px;width:245.5px;height:97px"><div class="ph" style="padding-right:41px">TRACKING SYSTEM</div></div>
<div class="a" style="left:688px;top:355px;width:243.5px;height:1px;background:#dedede"></div>
<div class="a" style="left:688px;top:369px;width:243.5px;height:1px;background:#dedede"></div>
<div class="a" style="left:688px;top:384px;width:243.5px;height:1px;background:#dedede"></div>
<div class="a" style="left:688px;top:398.6px;width:243.5px;height:1px;background:#dedede"></div>
<div class="t" style="left:889.2px;top:330.40px;font-size:5.8px;color:#1a1a8a;font-weight:700;"><span class="ul" style="border-color:rgba(26,26,138,.8)">Return History</span></div>
<div class="t" style="left:692.5px;top:343.70px;font-size:6.4px;color:#505050;font-weight:400;letter-spacing:0.127px;">Time Spent</div>
<div class="t" style="left:815px;top:343.70px;font-size:6.4px;color:#505050;font-weight:400;letter-spacing:-0.065px;">1Hr 38mins 7secs .</div>
<div class="t" style="left:692.5px;top:358.20px;font-size:6.4px;color:#505050;font-weight:400;letter-spacing:0.126px;">Created Date</div>
<div class="t" style="left:815px;top:358.20px;font-size:6.4px;color:#505050;font-weight:400;letter-spacing:0.124px;">Jan 18 2021 5:29PM</div>
<div class="t" style="left:692.5px;top:373.00px;font-size:6.4px;color:#505050;font-weight:400;letter-spacing:0.139px;">Completed Date</div>
<div class="t" style="left:815px;top:373.00px;font-size:6.4px;color:#505050;font-weight:400;letter-spacing:0.160px;">May 14 2021 10:42AM</div>
<div class="t" style="left:692.5px;top:387.70px;font-size:6.4px;color:#505050;font-weight:400;letter-spacing:0.096px;">Reviewed Date</div>
<div class="t" style="left:815px;top:387.70px;font-size:6.4px;color:#505050;font-weight:400;letter-spacing:0.124px;">Jan 15 2021 2:38PM</div>

</body></html>
